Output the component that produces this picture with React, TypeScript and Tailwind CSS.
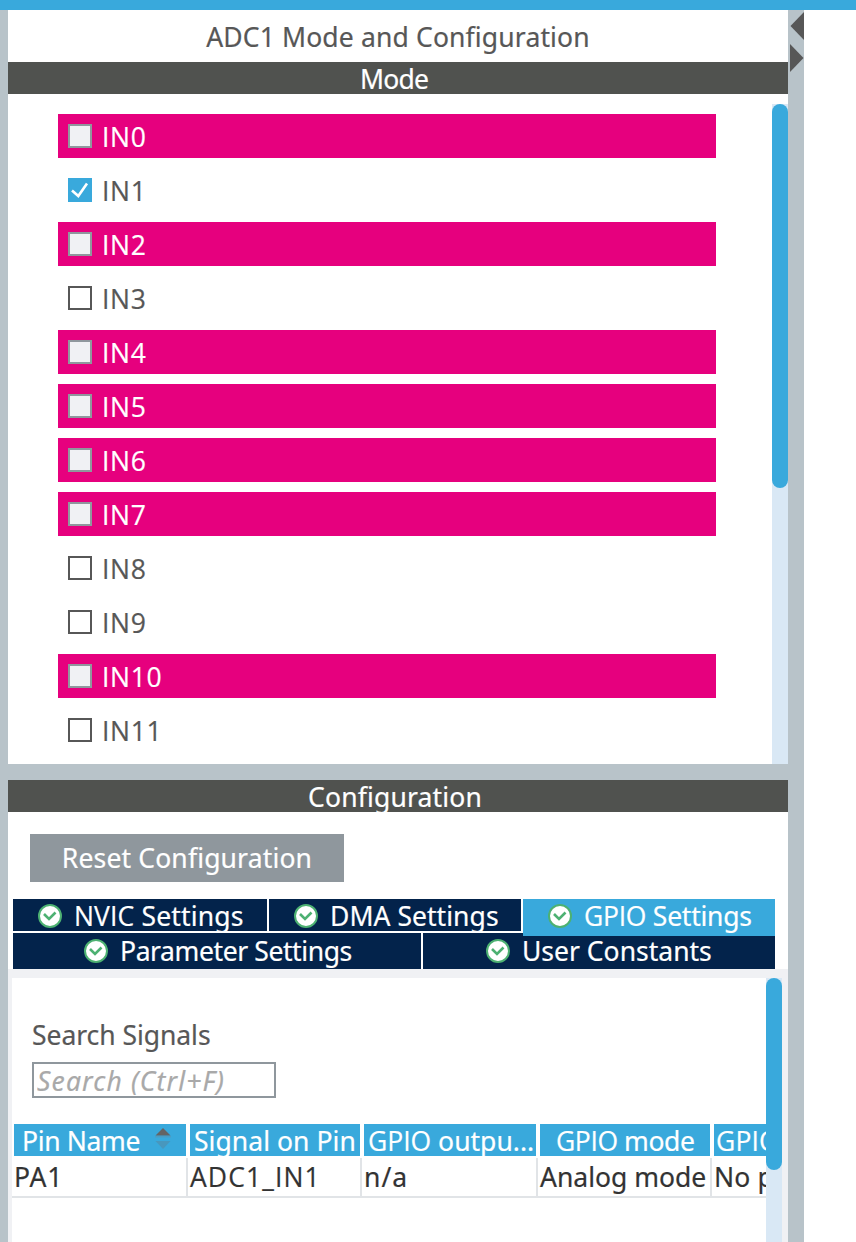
import { ReactNode } from 'react';

type Channel = {
  name: string;
  state: 'conflict' | 'checked' | 'free';
};

const channels: Channel[] = [
  { name: 'IN0', state: 'conflict' },
  { name: 'IN1', state: 'checked' },
  { name: 'IN2', state: 'conflict' },
  { name: 'IN3', state: 'free' },
  { name: 'IN4', state: 'conflict' },
  { name: 'IN5', state: 'conflict' },
  { name: 'IN6', state: 'conflict' },
  { name: 'IN7', state: 'conflict' },
  { name: 'IN8', state: 'free' },
  { name: 'IN9', state: 'free' },
  { name: 'IN10', state: 'conflict' },
  { name: 'IN11', state: 'free' },
];

const boxStyles = {
  conflict: 'border-2 border-[#8f979d] bg-[#f0f1f4]',
  checked: 'bg-[#39a9dc]',
  free: 'border-2 border-[#575757] bg-white',
};

// Open Sans has a plain capital I, Noto Sans draws it with bars
const plainCaps = "font-['Open_Sans',sans-serif]";

const ChannelRow = ({ name, state }: Channel) => (
  <label
    className={`flex h-11 shrink-0 items-center gap-2.5 pl-2.5 ${
      state === 'conflict' ? 'bg-[#e6007e] text-white' : 'text-[#575757]'
    }`}
  >
    <span className={`flex size-6 items-center justify-center ${boxStyles[state]}`}>
      {state === 'checked' && (
        <svg width="24" height="24" viewBox="0 0 24 24" fill="none">
          <path d="M4 12.5 10.3 18 19 5.5" stroke="white" strokeWidth="2.6" />
        </svg>
      )}
    </span>
    <span className={`pt-0.5 leading-[42px] tracking-[0.65px] ${plainCaps}`}>{name}</span>
  </label>
);

const StatusIcon = () => (
  <svg width="24" height="24" viewBox="0 0 24 24" fill="none" className="shrink-0">
    <circle cx="12" cy="12" r="11" fill="white" stroke="#4db172" strokeWidth="2" />
    <path d="M6 10 11 15 17.5 8.5" stroke="#4db172" strokeWidth="2.6" />
  </svg>
);

interface TabProps {
  className: string;
  children: ReactNode;
}

const Tab = ({ className, children }: TabProps) => (
  <button
    className={`flex shrink-0 gap-3 text-left whitespace-nowrap text-white ${className}`}
  >
    <span className="pt-[5px]">
      <StatusIcon />
    </span>
    <span className="leading-[34px]">{children}</span>
  </button>
);

const SortIcon = () => (
  <svg width="16" height="22" viewBox="0 0 16 22">
    <path d="M8 0 15.5 7.5H.5Z" fill="#646464" />
    <path d="M0 8h16v1.5H0Z" fill="#4b9cc4" />
    <path d="M.5 13h15L8 21Z" fill="#4897bd" />
  </svg>
);

const headCell = 'h-8 shrink-0 bg-[#39a9dc] leading-[34px]';
const bodyCell = 'h-[38px] shrink-0 border-r-2 border-[#e1e4e7] pl-0.5 leading-[38px]';

export default function App() {
  return (
    <div className="flex h-[1242px] w-[856px] flex-col overflow-hidden bg-white font-['Noto_Sans',sans-serif] text-[26.5px] tracking-[0.15px] whitespace-nowrap [-webkit-text-stroke-width:0.2px]">
      <div className="h-2.5 shrink-0 bg-[#39a9dc]" />
      <div className="flex min-h-0 flex-1">
        <div className="w-2 shrink-0 bg-[#b8c3c9]" />
        <div className="flex w-[780px] flex-col">
          {/* mode panel */}
          <h1 className="h-[52px] shrink-0 text-center leading-[54px] text-[#575757]">
            ADC1 Mode and Configuration
          </h1>
          <h2 className="h-8 shrink-0 bg-[#50524f] pr-2 text-center leading-[34px] tracking-[-0.8px] text-white">
            Mode
          </h2>
          <div className="flex h-[670px] shrink-0 justify-between pt-2.5">
            <div className="ml-[50px] flex w-[658px] flex-col gap-2.5 pt-2.5">
              {channels.map((channel) => (
                <ChannelRow key={channel.name} {...channel} />
              ))}
            </div>
            <div className="w-4 bg-[#d9e8f5]">
              <div className="h-96 rounded-full bg-[#39a9dc]" />
            </div>
          </div>
          <div className="h-4 shrink-0 bg-[#b8c3c9]" />

          {/* configuration panel */}
          <h2 className="h-8 shrink-0 bg-[#50524f] pr-1.5 text-center leading-[34px] text-white">
            Configuration
          </h2>
          <button className="mt-[22px] ml-[22px] h-12 w-[314px] shrink-0 bg-[#8f979d] pt-0.5 text-white">
            Reset Configuration
          </button>
          <div className="mt-[17px] ml-[5px] flex h-[34px] shrink-0 items-start gap-0.5">
            <Tab className="h-8 w-[254px] bg-[#03234b] pl-[25px]">
              <span className={plainCaps}>NVIC</span> Settings
            </Tab>
            <Tab className="h-8 w-[252px] bg-[#03234b] pl-[25px] tracking-[0.05px]">
              DMA Settings
            </Tab>
            <Tab className="z-10 h-[37px] w-[252px] bg-[#39a9dc] pl-[25px] tracking-[-0.25px]">
              <span className={plainCaps}>GPIO</span> Settings
            </Tab>
          </div>
          <div className="ml-[5px] flex h-9 shrink-0 gap-0.5">
            <Tab className="w-[408px] bg-[#03234b] pt-px pl-[71px] tracking-[-0.4px]">
              Parameter Settings
            </Tab>
            <Tab className="w-[352px] bg-[#03234b] pt-px pl-[63px] tracking-normal">
              User Constants
            </Tab>
          </div>

          <div className="flex min-h-0 flex-1 bg-[#f0f1f4] pt-[9px] pl-1">
            <div className="w-[754px] overflow-hidden bg-white">
              <div className="mt-9 ml-5 h-10 leading-[42px] tracking-[-0.05px] text-[#575757]">
                Search Signals
              </div>
              <input
                placeholder="Search (Ctrl+F)"
                className="mt-2 ml-5 block h-9 w-[244px] border-2 border-[#8f979d] pt-1 pl-[3px] tracking-[1.15px] italic outline-none placeholder:text-[#a9a9a9]"
              />
              <div className="mt-[26px] ml-0.5 flex gap-1 text-white">
                <div className={`${headCell} flex w-[172px] pl-2 tracking-[-0.35px]`}>
                  <span className="w-[133px]">Pin Name</span>
                  <span className="pt-1">
                    <SortIcon />
                  </span>
                </div>
                <div className={`${headCell} w-[170px] pl-1 tracking-[0.05px]`}>Signal on Pin</div>
                <div className={`${headCell} w-[172px] pl-1 tracking-normal`}>
                  <span className={plainCaps}>GPIO</span> outpu...
                </div>
                <div className={`${headCell} w-[170px] pl-4 tracking-[-0.4px]`}>
                  <span className={plainCaps}>GPIO</span> mode
                </div>
                <div className={`${headCell} ${plainCaps} w-[170px] pl-0.5`}>GPIO</div>
              </div>
              <div className="mt-0.5 flex border-b-2 border-[#e1e4e7] text-[#333]">
                <div className={`${bodyCell} w-44 tracking-[0.8px]`}>PA1</div>
                <div className={`${bodyCell} ${plainCaps} w-[174px] tracking-[1.1px]`}>
                  ADC1_IN1
                </div>
                <div className={`${bodyCell} w-44 tracking-[1px]`}>n/a</div>
                <div className={`${bodyCell} w-[174px] tracking-normal`}>Analog mode</div>
                <div className={`${bodyCell} w-[174px]`}>No p</div>
              </div>
            </div>
            <div className="w-4 bg-[#d9e8f5]">
              <div className="h-48 rounded-full bg-[#39a9dc]" />
            </div>
          </div>
        </div>
        {/* collapse strip */}
        <div className="flex w-4 flex-col bg-[#b8c3c9] pt-0.5 pl-0.5">
          <svg width="14" height="60" viewBox="0 0 14 60" fill="#575757">
            <path d="M14 0V28L.5 14Z" />
            <path d="M0 32V60L13.5 46Z" />
          </svg>
        </div>
      </div>
    </div>
  );
}
